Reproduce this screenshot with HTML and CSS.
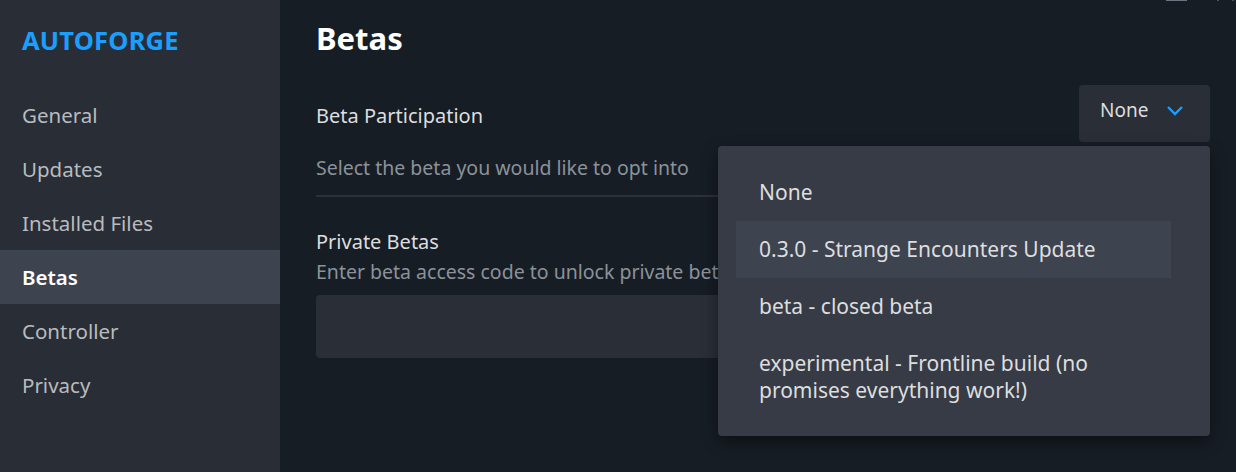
FILE: index.html
```html
<!DOCTYPE html>
<html>
<head>
<meta charset="utf-8">
<link rel="stylesheet" href="styles.css">
</head>
<body>
<div class="app">
  <aside class="sidebar">
    <div class="brand">AUTOFORGE</div>
    <nav class="nav">
      <div class="nav-item">General</div>
      <div class="nav-item">Updates</div>
      <div class="nav-item">Installed Files</div>
      <div class="nav-item active">Betas</div>
      <div class="nav-item">Controller</div>
      <div class="nav-item">Privacy</div>
    </nav>
  </aside>
  <main class="main">
    <div class="winctl"><span class="wc-min"></span><span class="wc-dot"></span><span class="wc-dot"></span></div>
    <h1 class="title">Betas</h1>
    <section class="field">
      <div class="field-row">
        <div class="field-label">Beta Participation</div>
        <div class="select-wrap">
          <button class="select">
            <span>None</span>
            <svg class="chev" width="18" height="12" viewBox="0 0 18 12"><path d="M2 2 L9 9 L16 2" fill="none" stroke="#1a9fff" stroke-width="2.4"/></svg>
          </button>
          <div class="menu">
            <div class="menu-item">None</div>
            <div class="menu-item hl">0.3.0 - Strange Encounters Update</div>
            <div class="menu-item">beta - closed beta</div>
            <div class="menu-item">experimental - Frontline build (no promises everything work!)</div>
          </div>
        </div>
      </div>
      <div class="field-desc">Select the beta you would like to opt into</div>
    </section>
    <section class="private">
      <div class="private-label">Private Betas</div>
      <div class="private-desc">Enter beta access code to unlock private betas</div>
      <div class="code-input"></div>
    </section>
  </main>
</div>
</body>
</html>
```
FILE: styles.css
```css
* { box-sizing: border-box; }
html, body { margin: 0; padding: 0; }
body {
  width: 1236px;
  height: 472px;
  overflow: hidden;
  background: #171d25;
  font-family: "Noto Sans", "Open Sans", sans-serif;
  color: #dcdedf;
}
.app {
  display: flex;
  height: 472px;
}
.sidebar {
  width: 280px;
  flex: none;
  background: #292d36;
  display: flex;
  flex-direction: column;
}
.brand {
  color: #1a9fff;
  font-weight: 700;
  font-size: 25.5px;
  line-height: 34px;
  padding: 23px 0 0 22px;
  letter-spacing: 0.2px;
}
.nav {
  margin-top: 31px;
  display: flex;
  flex-direction: column;
}
.nav-item {
  height: 54px;
  line-height: 54px;
  padding-left: 22px;
  font-size: 20.5px;
  color: #b8bcbf;
}
.nav-item.active {
  background: #3d4450;
  color: #ffffff;
  font-weight: 600;
}
.main {
  flex: 1;
  position: relative;
  padding: 16px 26px 0 36px;
}
.winctl {
  position: absolute;
  top: 0;
  right: 0;
  width: 70px;
  height: 2px;
}
.wc-min {
  position: absolute;
  left: 0;
  top: 0;
  width: 21px;
  height: 1px;
  background: #6b7480;
}
.wc-dot {
  position: absolute;
  top: 0;
  width: 2px;
  height: 1px;
  background: #4a525c;
}
.wc-dot:nth-child(2) { left: 51px; }
.wc-dot:nth-child(3) { left: 66px; }
.title {
  margin: 0;
  font-size: 31px;
  font-weight: 700;
  line-height: 44px;
  color: #ffffff;
}
.field {
  margin-top: 25px;
  border-bottom: 2px solid #2c313a;
}
.field-row {
  display: flex;
  justify-content: space-between;
  align-items: center;
  height: 57px;
}
.field-label {
  font-size: 20px;
  font-weight: 450;
  color: #dcdedf;
  padding-top: 3px;
}
.select-wrap {
  position: relative;
}
.select {
  width: 131px;
  height: 57px;
  border: none;
  border-radius: 4px;
  background: #2a2e37;
  color: #dcdedf;
  font-family: inherit;
  font-size: 19px;
  display: flex;
  align-items: center;
  padding: 0 0 7px 21px;
  gap: 18px;
}
.chev { margin-top: 2px; }
.menu {
  position: absolute;
  top: 61px;
  right: 0;
  width: 492px;
  background: #373b45;
  border-radius: 4px;
  box-shadow: 0 6px 16px rgba(0, 0, 0, 0.45);
  padding: 18px 39px 17px 18px;
  z-index: 2;
}
.menu-item {
  padding: 15px 23px;
  font-size: 21px;
  font-weight: 450;
  line-height: 27px;
  color: #dcdedf;
}
.menu-item.hl {
  background: #3e4350;
}
.field-desc {
  font-size: 19.5px;
  color: #8b929a;
  line-height: 26px;
  padding: 13px 0 14px;
}
.private {
  margin-top: 32px;
}
.private-label {
  font-size: 20px;
  font-weight: 450;
  color: #dcdedf;
  line-height: 26px;
}
.private-desc {
  font-size: 19.5px;
  color: #8b929a;
  line-height: 26px;
  margin-top: 4px;
  white-space: nowrap;
}
.code-input {
  margin-top: 10px;
  height: 63px;
  background: #2a2e37;
  border-radius: 4px;
}
```
